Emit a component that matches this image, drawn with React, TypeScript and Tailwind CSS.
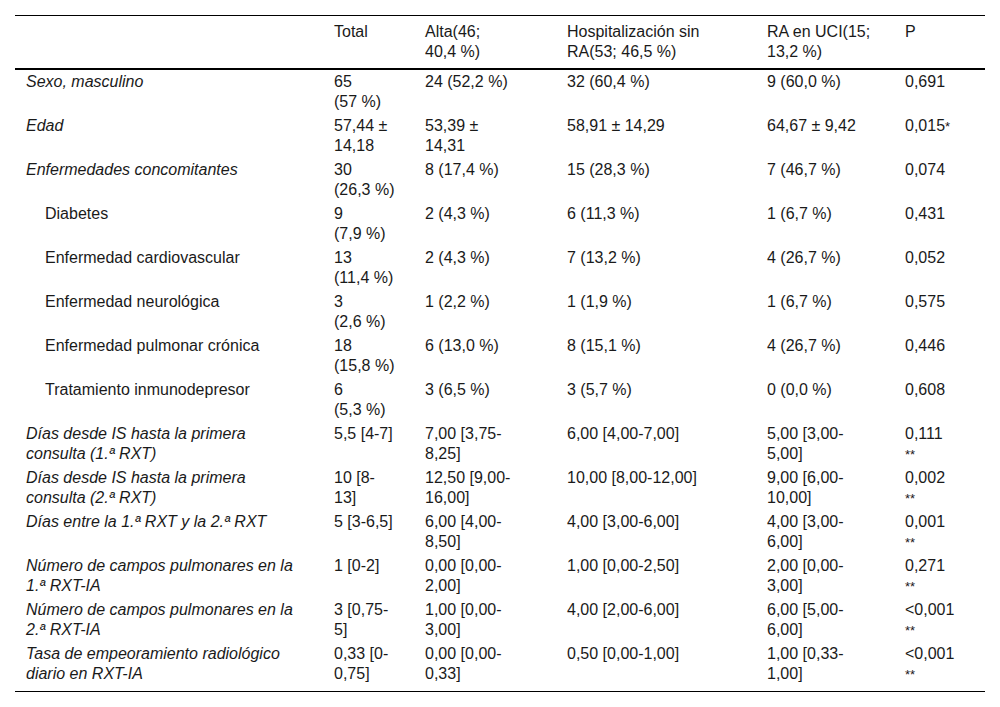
import React from "react";

type Row = { label: string; italic: boolean; indent?: boolean; cells: string[] };

const rows: Row[] = [
  { label: "Sexo, masculino", italic: true, cells: ["65 (57 %)", "24 (52,2 %)", "32 (60,4 %)", "9 (60,0 %)", "0,691"] },
  { label: "Edad", italic: true, cells: ["57,44 ± 14,18", "53,39 ± 14,31", "58,91 ± 14,29", "64,67 ± 9,42", "0,015*"] },
  { label: "Enfermedades concomitantes", italic: true, cells: ["30 (26,3 %)", "8 (17,4 %)", "15 (28,3 %)", "7 (46,7 %)", "0,074"] },
  { label: "Diabetes", italic: false, indent: true, cells: ["9 (7,9 %)", "2 (4,3 %)", "6 (11,3 %)", "1 (6,7 %)", "0,431"] },
  { label: "Enfermedad cardiovascular", italic: false, indent: true, cells: ["13 (11,4 %)", "2 (4,3 %)", "7 (13,2 %)", "4 (26,7 %)", "0,052"] },
  { label: "Enfermedad neurológica", italic: false, indent: true, cells: ["3 (2,6 %)", "1 (2,2 %)", "1 (1,9 %)", "1 (6,7 %)", "0,575"] },
  { label: "Enfermedad pulmonar crónica", italic: false, indent: true, cells: ["18 (15,8 %)", "6 (13,0 %)", "8 (15,1 %)", "4 (26,7 %)", "0,446"] },
  { label: "Tratamiento inmunodepresor", italic: false, indent: true, cells: ["6 (5,3 %)", "3 (6,5 %)", "3 (5,7 %)", "0 (0,0 %)", "0,608"] },
  { label: "Días desde IS hasta la primera consulta (1.ª RXT)", italic: true, cells: ["5,5 [4-7]", "7,00 [3,75-8,25]", "6,00 [4,00-7,00]", "5,00 [3,00-5,00]", "0,111 **"] },
  { label: "Días desde IS hasta la primera consulta (2.ª RXT)", italic: true, cells: ["10 [8-13]", "12,50 [9,00-16,00]", "10,00 [8,00-12,00]", "9,00 [6,00-10,00]", "0,002 **"] },
  { label: "Días entre la 1.ª RXT y la 2.ª RXT", italic: true, cells: ["5 [3-6,5]", "6,00 [4,00-8,50]", "4,00 [3,00-6,00]", "4,00 [3,00-6,00]", "0,001 **"] },
  { label: "Número de campos pulmonares en la 1.ª RXT-IA", italic: true, cells: ["1 [0-2]", "0,00 [0,00-2,00]", "1,00 [0,00-2,50]", "2,00 [0,00-3,00]", "0,271 **"] },
  { label: "Número de campos pulmonares en la 2.ª RXT-IA", italic: true, cells: ["3 [0,75-5]", "1,00 [0,00-3,00]", "4,00 [2,00-6,00]", "6,00 [5,00-6,00]", "<0,001 **"] },
  { label: "Tasa de empeoramiento radiológico diario en RXT-IA", italic: true, cells: ["0,33 [0-0,75]", "0,00 [0,00-0,33]", "0,50 [0,00-1,00]", "1,00 [0,33-1,00]", "<0,001 **"] },
];

const innerW = ["w-[62px]", "w-[88px]", "w-[170px]", "w-[108px]", "w-[51px]"];

function Cell({ text }: { text: string }) {
  const t = text.replace(/ %/g, "\u00a0%");
  const m = t.match(/^(.*?)(\s?\*+)$/);
  if (m) {
    return (
      <>
        {m[1]}
        {m[2].startsWith(" ") ? " " : ""}
        <span className="text-[13px] leading-none">{m[2].trim()}</span>
      </>
    );
  }
  return <>{t}</>;
}

export default function App() {
  return (
    <div className="bg-white min-h-[707px] w-[1000px] pt-[15px] px-[15px] text-[#1a1a1a] font-['Liberation_Sans',Arial,sans-serif] text-[16px] leading-[20px]">
      <table className="table-fixed border-collapse w-[970px]">
        <colgroup>
          <col className="w-[309px]" />
          <col className="w-[91px]" />
          <col className="w-[142px]" />
          <col className="w-[200px]" />
          <col className="w-[138px]" />
          <col className="w-[90px]" />
        </colgroup>
        <thead>
          <tr className="border-t border-black border-b-2">
            <th className="font-normal text-left align-top pl-[11px] pt-[6px] pb-[6px]"></th>
            {["Total", "Alta(46; 40,4 %)", "Hospitalización sin RA(53; 46,5 %)", "RA en UCI(15; 13,2 %)", "P"].map((h, i) => (
              <th key={i} className="font-normal text-left align-top pl-[10px] pt-[6px] pb-[6px]">
                <div className={innerW[i]}>
                  <Cell text={h} />
                </div>
              </th>
            ))}
          </tr>
        </thead>
        <tbody>
          {rows.map((r, ri) => {
            const last = ri === rows.length - 1;
            const pad = last ? "pt-[2px] pb-[7px]" : "pt-[2px] pb-[2px]";
            return (
              <tr key={ri} className={last ? "border-b border-black" : ""}>
                <td className={`align-top ${pad} ${r.indent ? "pl-[30px]" : "pl-[11px]"}`}>
                  <div className={`${r.indent ? "w-[256px]" : "w-[275px]"} ${r.italic ? "italic" : ""}`}>{r.label}</div>
                </td>
                {r.cells.map((c, ci) => (
                  <td key={ci} className={`align-top pl-[10px] ${pad}`}>
                    <div className={innerW[ci]}>
                      <Cell text={c} />
                    </div>
                  </td>
                ))}
              </tr>
            );
          })}
        </tbody>
      </table>
    </div>
  );
}
